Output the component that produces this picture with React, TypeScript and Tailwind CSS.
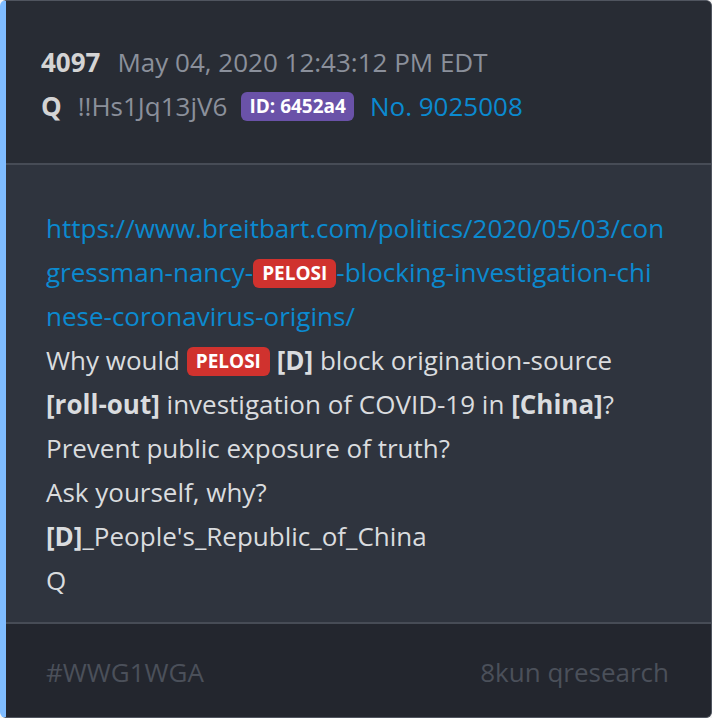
import React from "react";

const Pelosi = () => (
  <span className="inline-block rounded-[6px] bg-[#d0322e] px-[9px] text-[19px] font-bold leading-[29px] text-white align-[2px] [word-break:normal]">
    PELOSI
  </span>
);

export default function App() {
  return (
    <div
      className="w-[712px] h-[718px] bg-[#f4f4f4]"
      style={{ fontFamily: '"Open Sans", "Noto Sans", sans-serif' }}
    >
      <div className="flex h-[718px] w-[712px] flex-col overflow-hidden rounded-[6px] border border-[#50555f] border-l-[6px] border-l-[#7fbcff] bg-[#2f343e]">
        <div className="bg-[#282c34] pl-[35px] pr-[30px] pt-[39px] pb-[35px] text-[26px] leading-[44px]">
          <div className="flex items-baseline">
            <span className="font-bold text-[#d4d4d4]">4097</span>
            <span className="ml-[17px] text-[#8b909b]">May 04, 2020 12:43:12 PM EDT</span>
          </div>
          <div className="flex items-center">
            <span className="font-bold text-[#d4d4d4]">Q</span>
            <span className="ml-[16px] text-[#8b909b]">!!Hs1Jq13jV6</span>
            <span className="ml-[14px] rounded-[6px] bg-[#6a52a8] px-[8px] text-[19px] font-bold leading-[29px] text-white">
              ID: 6452a4
            </span>
            <span className="ml-[16px] text-[#0b8ad0]">No. 9025008</span>
          </div>
        </div>
        <div className="h-[2px] bg-[#474c56]" />
        <div className="flex-1 bg-[#2f343e] pl-[40px] pr-[46px] pt-[41px] pb-[20px] text-[26px] leading-[44px] text-[#dadcdf]">
          <div className="break-all text-[#0b8ad0]">
            https://www.breitbart.com/politics/2020/05/03/congressman-nancy-<Pelosi />-blocking-investigation-chinese-coronavirus-origins/
          </div>
          <div>
            Why would <Pelosi /> <b>[D]</b> block origination-source{" "}
            <b className="whitespace-nowrap">[roll-out]</b> investigation of COVID-19 in <b>[China]</b>?
          </div>
          <div>Prevent public exposure of truth?</div>
          <div>Ask yourself, why?</div>
          <div>
            <b>[D]</b>_People's_Republic_of_China
          </div>
          <div>Q</div>
        </div>
        <div className="h-[2px] bg-[#474c56]" />
        <div className="flex h-[93px] items-center justify-between bg-[#23262e] pl-[40px] pr-[42px] pt-[4px] text-[26px] text-[#4b505a]">
          <span>#WWG1WGA</span>
          <span>8kun qresearch</span>
        </div>
      </div>
    </div>
  );
}
